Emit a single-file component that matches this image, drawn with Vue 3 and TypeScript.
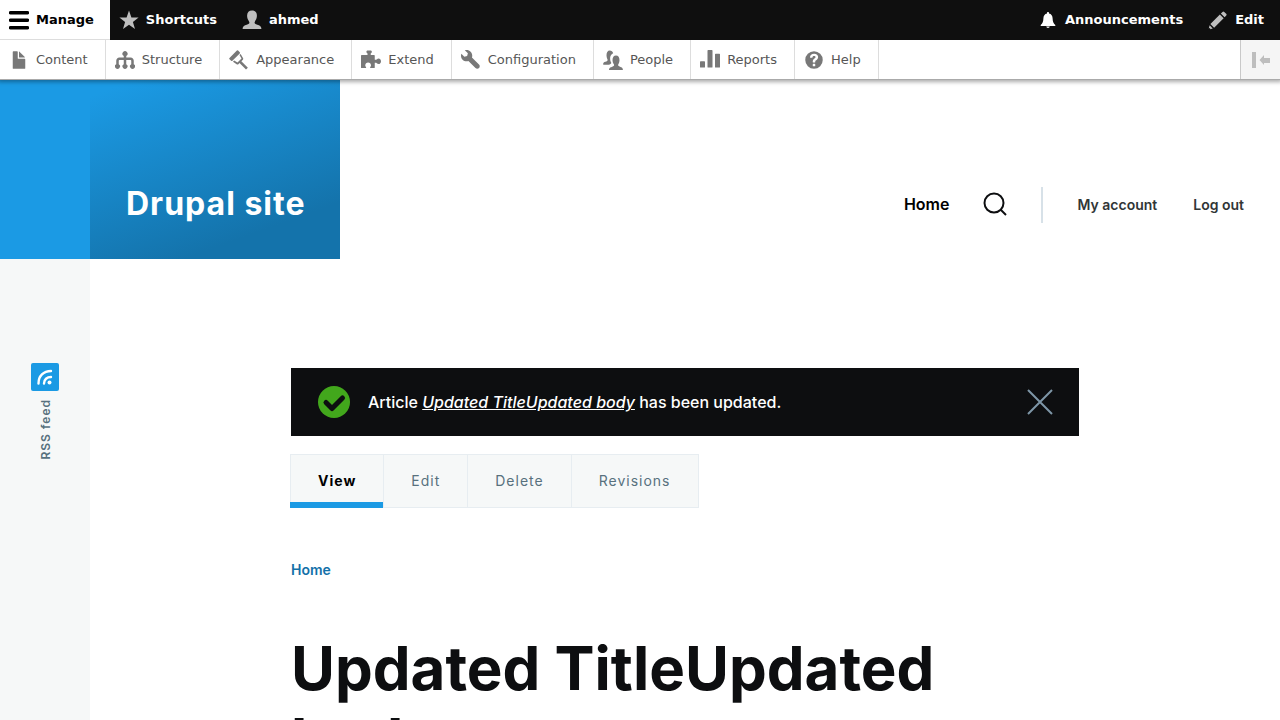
<script setup lang="ts">
interface TrayItem {
  label: string
  icon: string
}

const trayItems: TrayItem[] = [
  { label: 'Content', icon: 'file' },
  { label: 'Structure', icon: 'orgchart' },
  { label: 'Appearance', icon: 'paintbrush' },
  { label: 'Extend', icon: 'puzzle' },
  { label: 'Configuration', icon: 'wrench' },
  { label: 'People', icon: 'people' },
  { label: 'Reports', icon: 'barchart' },
  { label: 'Help', icon: 'help' },
]

const iconPaths: Record<string, string> = {
  file: 'M12.5 7h-5a.5.5 0 0 1-.5-.5v-5a.5.5 0 0 0-.5-.5h-3a.5.5 0 0 0-.5.5v13a.5.5 0 0 0 .5.5h9a.5.5 0 0 0 .5-.5v-7a.5.5 0 0 0-.5-.5zM8.5 6h4c.28 0 .34-.16.15-.35L8.35 1.35C8.16 1.16 8 1.22 8 1.5v4a.5.5 0 0 0 .5.5z',
  orgchart:
    'M15 11.3V8.5C15 7.1 13.900 6 12.500 6H9V4.700a2 2 0 1 0-2 0V6H3.500C2.100 6 1 7.100 1 8.500v2.800a2 2 0 1 0 2 0V8.500c0-.3.2-.5.5-.5H7v3.300a2 2 0 1 0 2 0V8h3.500c.3 0 .5.2.5.5v2.800a2 2 0 1 0 2 0z',
  paintbrush:
    'M6.300.4a.7.700 0 0 1 1 0l1.300 1.300a.7.700 0 0 1 0 1L2.700 8.600a.7.700 0 0 1-1 0L.4 7.300a.7.700 0 0 1 0-1zM9.300 3.100l2 3.500c.2.400.1.800-.2 1.100L9.900 8.900l5.200 5.200-1.500 1.500-5.200-5.200-.9.9c-.3.3-.7.4-1.100.2L3.200 9.300l.9-.9 2.700 1.600 3.200-3.200-1.600-2.800z',
  puzzle:
    'M5.200 4V2.800c0-.4-.9-.6-.9-1.500C4.300.6 4.900.3 5.500.3h2c.6 0 1.200.3 1.200 1 0 .9-.9 1.100-.9 1.500V4h2.700c.3 0 .5.2.5.5v3.200h1.100c.5 0 .8-1 2-1 1 0 1.900.9 1.900 2.200s-.9 2.300-1.900 2.300c-1.200 0-1.500-1-2-1H11v3.700c0 .3-.2.5-.5.5H7.600c-.3 0-.4-.2-.3-.5.100-.3.700-.8.700-1.700 0-1.200-1-2.200-2.300-2.200s-2.300 1-2.300 2.200c0 .9.600 1.400.7 1.700.1.300 0 .5-.3.5H.5c-.3 0-.5-.2-.5-.5V4.500c0-.3.2-.5.500-.5z',
  wrench:
    'M14.416 11.586l-.01-.009-5.656-5.656c.15-.449.252-.921.252-1.421 0-2.485-2.016-4.500-4.502-4.500-.505 0-.981.102-1.434.255l2.431 2.431-.588 2.196-2.196.588L.268 3.025C.106 3.489 0 3.981 0 4.500 0 6.986 2.014 9 4.500 9c.5 0 .972-.102 1.421-.251l5.667 5.665c.781.781 2.047.781 2.828 0s.781-2.047 0-2.828z',
  people:
    'M6.200 11c-.5.500-1 .700-1.700.700h-4c-.3 0-.5-.2-.4-.5.100-1.100.700-1.600 1.800-1.900 1.200-.3 1.800-.700 1.800-1.400 0-.6-.8-1.500-.9-3.600C2.700 1.900 3.700.3 5.400.3c1.400 0 2.300.8 2.700 2.200-1.700.9-2.500 2.400-2.400 4.600.1 1.500.500 2.400.9 3 .1.400 0 .6-.4.900zM5 16c-.2 0-.3-.2-.2-.5.300-1.500 1.300-1.800 2.600-2.200 1-.3 1.500-.700 1.500-1.300 0-.9-1.200-1.600-1.300-3.700C7.500 5.800 8.600 4.300 10.400 4.300s2.900 1.500 2.800 4c-.1 2.100-1.100 2.800-1.100 3.700 0 .6.500 1 1.500 1.300 1.200.4 2 .7 2.300 2.200.1.300 0 .5-.3.5z',
  barchart:
    'M.5 9h3a.5.5 0 0 1 .5.5v4a.5.5 0 0 1-.5.5h-3a.5.5 0 0 1-.5-.5v-4A.5.500 0 0 1 .5 9zM6.500 0h3a.5.5 0 0 1 .5.5v13a.5.5 0 0 1-.5.5h-3a.5.5 0 0 1-.5-.5V.5a.5.5 0 0 1 .5-.5zM12.500 3h3a.5.5 0 0 1 .5.5v10a.5.5 0 0 1-.5.5h-3a.5.5 0 0 1-.5-.5v-10a.5.5 0 0 1 .5-.5z',
  help: 'M8 1a7 7 0 1 0 0 14A7 7 0 0 0 8 1zM9 12.500a.5.500 0 0 1-.5.500h-1a.5.500 0 0 1-.5-.5v-1a.5.500 0 0 1 .5-.5h1a.5.500 0 0 1 .5.500zM9 9.700c0 .2-.2.300-.5.300h-1c-.3 0-.5-.2-.5-.5v-.6c0-.7.300-1.300.9-1.700L8.600 6.600c.5-.4.600-.600.600-1 0-.5-.4-.8-1.100-.8-.8 0-1.200.3-1.300 1-.1.300-.2.400-.5.400h-1c-.3 0-.5-.2-.5-.5C4.900 4 6.100 3 8.100 3s3.200 1.100 3.200 2.600c0 .9-.4 1.600-1.200 2.300l-.7.500c-.3.300-.4.500-.4.800z',
}

const tabs: string[] = ['View', 'Edit', 'Delete', 'Revisions']
</script>

<template>
  <div class="page">
    <header class="toolbar">
      <nav class="bar" aria-label="Toolbar items">
        <button type="button" class="bar-item active">
          <svg class="icon" viewBox="0 0 20 20"><path d="M1.500 1h17a1.500 1.500 0 0 1 0 3.500h-17a1.500 1.500 0 0 1 0-3.500zM1.500 8.500h17a1.500 1.500 0 0 1 0 3.500h-17a1.500 1.500 0 0 1 0-3.500zM1.500 16h17a1.500 1.500 0 0 1 0 3.500h-17a1.500 1.500 0 0 1 0-3.500z" /></svg>
          Manage
        </button>
        <button type="button" class="bar-item">
          <svg class="icon" viewBox="0 0 20 20"><path d="M10 0.500l2.400 6.900 7.200.1-5.700 4.400 2.100 7-6-4.200-6 4.200 2.100-7L.4 7.500l7.200-.1z" /></svg>
          Shortcuts
        </button>
        <button type="button" class="bar-item">
          <svg class="icon" viewBox="0 0 20 20"><path d="M1 19c-.400 0-.500-.300-.400-.700.400-2.300 1.700-2.900 4.100-3.600 2-.5 2.700-1 2.700-2.100 0-1.500-2.300-2.700-2.300-7C5.100 2.300 7 .5 10 .5s4.900 1.800 4.900 5.100c0 4.300-2.300 5.500-2.300 7 0 1.100.7 1.600 2.700 2.100 2.400.7 3.700 1.300 4.100 3.600.1.400 0 .7-.4.700z" /></svg>
          ahmed
        </button>
        <span class="spacer"></span>
        <a href="#" class="bar-item announcements">
          <svg class="icon" viewBox="0 0 20 20"><path d="M10 2c.6 0 1 .4 1 1v.4c2.400.5 3.500 2.300 3.600 4.900.1 3.600.8 5 2.700 6.700v1H2.700v-1c1.900-1.700 2.600-3.100 2.700-6.700C5.500 5.700 6.600 3.900 9 3.400V3c0-.6.4-1 1-1zM8.300 16.500h3.400c0 .8-.7 1.400-1.700 1.400s-1.700-.6-1.700-1.400z" /></svg>
          Announcements
        </a>
        <button type="button" class="bar-item">
          <svg class="icon" viewBox="0 0 16 16"><path d="M14.500 3l-1.500-1.500a1 1 0 0 0-1.400 0L10.300 2.700l3 3 1.300-1.300a1 1 0 0 0 0-1.400zM9.500 3.500l3 3-7.600 7.600-3-3zM1.300 12.200l2.500 2.500-2.100.6.100-.600-.4-.4-.8.500z" /></svg>
          Edit
        </button>
      </nav>
      <nav class="tray" aria-label="Administration menu">
        <a v-for="item in trayItems" :key="item.label" href="#" class="tray-item">
          <svg class="icon" viewBox="0 0 16 16"><path fill-rule="evenodd" :d="iconPaths[item.icon]" /></svg>
          {{ item.label }}
        </a>
        <span class="spacer"></span>
        <button type="button" class="orientation" aria-label="Vertical orientation">
          <svg width="20" height="16" viewBox="0 0 20 16"><path d="M1 0h4v16H1zM8.500 8l4.500-5v3h6v5h-6v2z" /></svg>
        </button>
      </nav>
    </header>

    <div class="site">
      <aside class="side">
        <div class="side-top"></div>
        <a href="#" class="rss">
          <svg width="28" height="28" viewBox="0 0 28 28">
            <rect width="28" height="28" rx="2" fill="#1b9ae4" />
            <path d="M7.500 20.500c0-7.500 5-12.500 12.500-12.500M13 20.500c0-4 3-6.500 7-6.500" fill="none" stroke="#fff" stroke-width="2.400" stroke-linecap="round" />
            <circle cx="18.500" cy="19.500" r="2" fill="#fff" />
          </svg>
          <span class="rss-text">RSS feed</span>
        </a>
      </aside>

      <div class="body">
        <header class="site-header">
          <a href="#" class="branding">Drupal site</a>
          <nav class="menu" aria-label="Main navigation">
            <a href="#" class="menu-home">Home</a>
            <button type="button" class="search" aria-label="Search">
              <svg width="24" height="24" viewBox="0 0 24 24"><circle cx="11" cy="11" r="9.500" /><path d="M17.500 17.500L23 23" /></svg>
            </button>
            <div class="account">
              <a href="#">My account</a>
              <a href="#">Log out</a>
            </div>
          </nav>
        </header>

        <main class="main">
          <div class="message" role="status">
            <svg width="32" height="32" viewBox="0 0 32 32">
              <circle cx="16" cy="16" r="16" fill="#42a71c" />
              <path d="M8 16.500l6 6L24.500 12" fill="none" stroke="#0d0e10" stroke-width="5" stroke-linecap="round" stroke-linejoin="round" />
            </svg>
            <p>Article <a href="#"><em>Updated TitleUpdated body</em></a> has been updated.</p>
            <button type="button" class="close" aria-label="Close message">
              <svg width="26" height="26" viewBox="0 0 26 26"><path d="M1 1l24 24M25 1L1 25" /></svg>
            </button>
          </div>
          <nav class="tabs" aria-label="Primary tabs">
            <a v-for="(tab, i) in tabs" :key="tab" href="#" :class="{ current: i === 0 }">{{ tab }}</a>
          </nav>
          <nav class="breadcrumb" aria-label="Breadcrumb"><a href="#">Home</a></nav>
          <h1>Updated TitleUpdated body</h1>
        </main>
      </div>
    </div>
  </div>
</template>

<style>
body {
  margin: 0;
  background: #fff;
}
</style>

<style scoped>
.page {
  min-height: 100vh;
  display: flex;
  flex-direction: column;
  font-family: Metropolis, Inter, sans-serif;
  color: #0d0e10;
}
a {
  color: inherit;
  text-decoration: none;
}
button {
  border: 0;
  padding: 0;
  margin: 0;
  background: none;
  font: inherit;
  color: inherit;
  cursor: pointer;
}
svg {
  display: block;
  flex: none;
}
.spacer {
  flex: 1;
}

.toolbar {
  position: sticky;
  top: 0;
  z-index: 2;
  font-family: "DejaVu Sans", sans-serif;
  font-size: 13px;
  box-shadow: 0 0 4px 2px rgba(0, 0, 0, 0.33);
}
.bar {
  display: flex;
  height: 40px;
  background: #0f0f0f;
  color: #fff;
  font-weight: 700;
}
.bar-item,
.tray-item {
  display: flex;
  align-items: center;
  gap: 7px;
  padding: 0 17px 0 9px;
}
.bar-item {
  padding-right: 16px;
  border-bottom: 1px solid #0f0f0f;
}
.icon {
  width: 20px;
  height: 20px;
}
.bar-item .icon {
  fill: #bebebe;
}
.bar-item.active {
  background: #fff;
  color: #000;
  border-color: #ddd;
}
.bar-item.active .icon {
  fill: #000;
}
.bar-item.announcements .icon {
  fill: #fff;
}
.tray {
  display: flex;
  height: 39px;
  background: #fff;
  border-bottom: 1px solid #aaa;
  color: #565656;
}
.tray-item {
  border-right: 1px solid #ddd;
}
.tray-item .icon {
  fill: #787878;
}
.orientation {
  display: flex;
  align-items: center;
  justify-content: center;
  width: 40px;
  background: #f5f5f5;
  border-left: 1px solid #c9c9c9;
}
.orientation svg {
  fill: #bebebe;
}

.site {
  flex: 1;
  display: flex;
}
.side {
  width: 90px;
  background: #f6f8f8;
}
.side-top {
  height: 179px;
  background: #1b9ae4;
}
.rss {
  display: flex;
  flex-direction: column;
  align-items: center;
  gap: 8px;
  padding-top: 104px;
  color: #58717e;
  font-size: 12px;
  font-weight: 600;
}
.rss-text {
  writing-mode: vertical-rl;
  transform: rotate(180deg);
  letter-spacing: 1px;
}
.body {
  flex: 1;
  min-width: 0;
}
.site-header {
  display: flex;
  justify-content: space-between;
  height: 179px;
}
.branding {
  box-sizing: border-box;
  width: 250px;
  padding: 104px 36px 0;
  background: linear-gradient(160deg, #1b9ae4 6%, #1473ab 79%);
  color: #fff;
  font-size: 32px;
  line-height: 40px;
  font-weight: 700;
  letter-spacing: 1px;
  white-space: nowrap;
}
.menu {
  display: flex;
  align-items: center;
  align-self: flex-end;
  height: 36px;
  padding: 0 36px 36px 0;
}
.menu a,
.search {
  padding-bottom: 2px;
}
.menu-home {
  font-size: 16px;
  font-weight: 600;
  color: #000;
}
.search {
  margin: 0 34px;
}
.search svg {
  fill: none;
  stroke: #0d0e10;
  stroke-width: 2;
}
.account {
  display: flex;
  align-items: center;
  gap: 36px;
  height: 36px;
  padding-left: 34px;
  border-left: 2px solid #d7e1e8;
  font-size: 14px;
  font-weight: 600;
  color: #313637;
}

.main {
  max-width: 788px;
  margin: 109px auto 0;
}
.message {
  display: flex;
  align-items: center;
  gap: 18px;
  height: 68px;
  padding: 0 26px 0 27px;
  background: #0d0e10;
  color: #fff;
  font-size: 16px;
  font-weight: 500;
}
.message p {
  flex: 1;
  margin: 0;
}
.message p a {
  text-decoration: underline;
}
.close svg {
  fill: none;
  stroke: #7e96a7;
  stroke-width: 2;
}
.tabs {
  display: flex;
  width: max-content;
  margin: 18px 0 0 -1px;
  border: 1px solid #e7edf1;
  background: #f6f8f8;
  box-sizing: border-box;
  height: 54px;
  font-size: 14px;
  letter-spacing: 1px;
  color: #58717e;
}
.tabs a {
  display: flex;
  align-items: center;
  padding: 0 27px 2px;
  border-left: 1px solid #e7edf1;
}
.tabs .current {
  margin: 0 0 -1px -1px;
  border-bottom: 6px solid #1b9ae4;
  padding: 3px 27px 0 28px;
  border-left: 0;
  font-weight: 700;
  color: #000;
}
.breadcrumb {
  margin-top: 52px;
  font-size: 14px;
  line-height: 20px;
  font-weight: 600;
  color: #1371a9;
}
h1 {
  margin: 52px 0 0;
  font-size: 60px;
  line-height: 72px;
  font-weight: 700;
}
</style>
